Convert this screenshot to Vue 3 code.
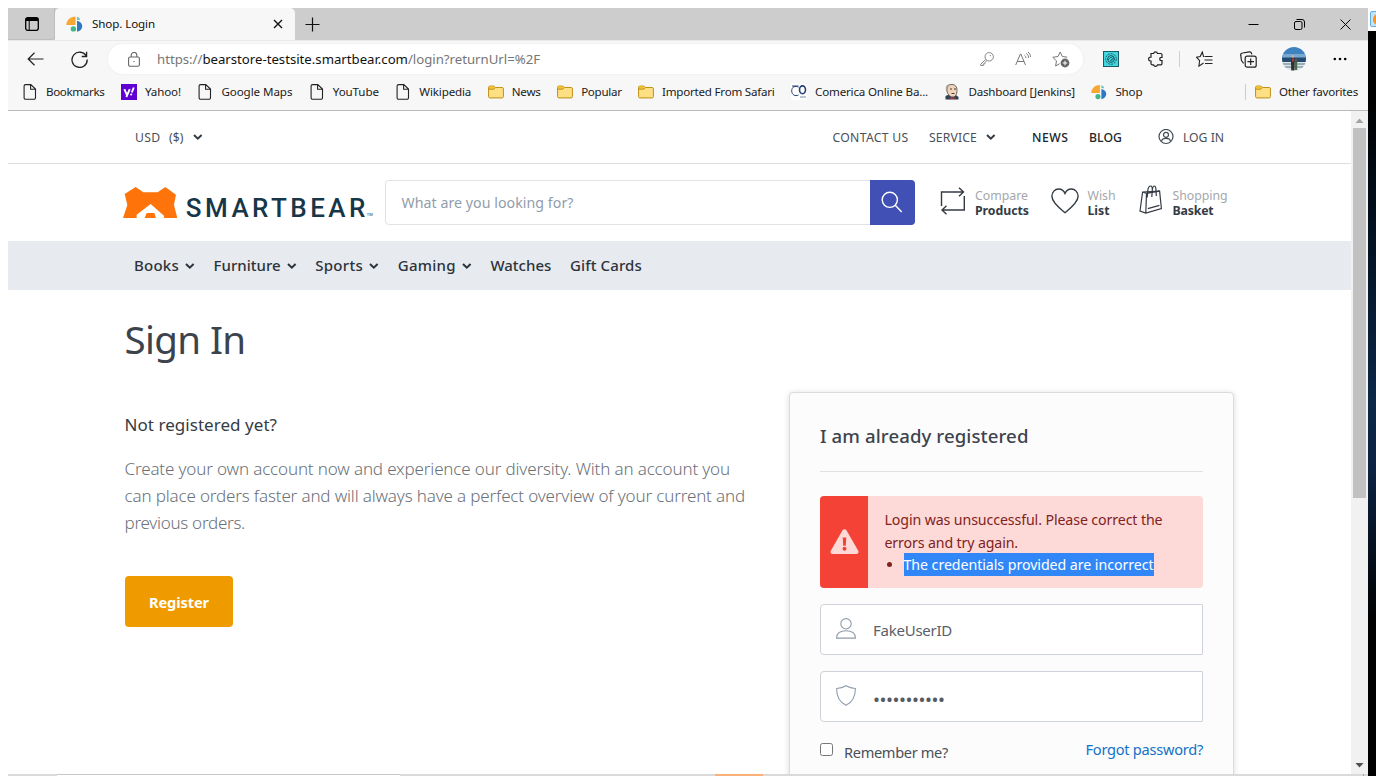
<script setup>
import { h } from 'vue'

// Tracks a label out (or in) so that it occupies the given width in pixels.
const vFit = {
  mounted(el, { value }) {
    if (!value) return
    el.style.letterSpacing = '0px'
    const count = [...el.textContent.trim()].length
    const natural = el.getBoundingClientRect().width
    el.style.letterSpacing = `${(value - natural) / count}px`
  }
}

const bookmarks = [
  { icon: 'page', label: 'Bookmarks', width: 58.5 },
  { icon: 'yahoo', label: 'Yahoo!', width: 36 },
  { icon: 'page', label: 'Google Maps', width: 71 },
  { icon: 'page', label: 'YouTube', width: 46 },
  { icon: 'page', label: 'Wikipedia', width: 52 },
  { icon: 'folder', label: 'News', width: 29 },
  { icon: 'folder', label: 'Popular', width: 40.5 },
  { icon: 'folder', label: 'Imported From Safari', width: 112.5 },
  { icon: 'bank', label: 'Comerica Online Ba...', width: 113 },
  { icon: 'jenkins', label: 'Dashboard [Jenkins]', width: 106.5 },
  { icon: 'shop', label: 'Shop', width: 27 }
]

const menu = [
  { label: 'Books', width: 45, sub: true },
  { label: 'Furniture', width: 67, sub: true },
  { label: 'Sports', width: 48, sub: true },
  { label: 'Gaming', width: 58, sub: true },
  { label: 'Watches', width: 61 },
  { label: 'Gift Cards', width: 72 }
]

const Chevron = () =>
  h('svg', { width: 10, height: 8, viewBox: '0 0 10 8', fill: 'none', stroke: 'currentColor', 'stroke-width': 2 }, [
    h('path', { d: 'M1 2l3.800 3.700L8.600 2' })
  ])

const ShopMark = () =>
  h('svg', { width: 17, height: 16, viewBox: '0 0 17 16' }, [
    h('path', { d: 'M9.5 .5v8.5H.3C.3 4.2 4.3 .5 9.5 .5z', fill: '#f9a733' }),
    h('path', { d: 'M11 .7c2 .4 3 1.800 3 3.300h-3z', fill: '#6cc6bd' }),
    h('path', { d: 'M11 4.800c3.200.6 5.200 2.600 5.200 5.400s-2 4.900-5.200 5.600z', fill: '#2f78c2' }),
    h('circle', { cx: 7.4, cy: 12.9, r: 2.7, fill: '#45b787' })
  ])
</script>

<template>
  <div class="desktop">
    <div class="browser">
      <div class="titlebar">
        <div class="tab-actions">
          <svg width="14" height="14" viewBox="0 0 14 14" fill="none" stroke="#000">
            <rect x=".7" y=".7" width="12.600" height="12.600" rx="2" stroke-width="1.300" />
            <path d="M1 2.500h12" stroke-width="3" /><path d="M4.200 3v10" />
          </svg>
        </div>
        <div class="tab">
          <ShopMark />
          <span v-fit="63" class="tab-title">Shop. Login</span>
          <svg width="10" height="10" viewBox="0 0 10 10" stroke="#111" stroke-width="1.400"><path d="M1 1l8 8M9 1L1 9" /></svg>
        </div>
        <svg class="plus" width="15" height="15" viewBox="0 0 15 15" stroke="#111" stroke-width="1.200"><path d="M7.500 .5v14M.5 7.500h14" /></svg>
        <div class="win-buttons">
          <svg width="11" height="11" viewBox="0 0 11 11" stroke="#000"><path d="M.5 5.500h10" /></svg>
          <svg width="11" height="11" viewBox="0 0 11 11" fill="none" stroke="#000"><rect x=".5" y="2.500" width="7.500" height="8" rx="1.500" /><path d="M2.500 .5h5.500a2.500 2.500 0 0 1 2.500 2.500v5.500" /></svg>
          <svg width="11" height="11" viewBox="0 0 11 11" stroke="#000"><path d="M.5 .5l10 10M10.500 .5l-10 10" /></svg>
        </div>
      </div>

      <div class="toolbar">
        <svg class="back" width="17" height="14" viewBox="0 0 17 14" fill="none" stroke="#222" stroke-width="1.200"><path d="M7.500 .8L1.200 7l6.300 6.200M1.200 7h15.300" /></svg>
        <svg class="reload" width="17" height="17" viewBox="0 0 17 17" fill="none" stroke="#222" stroke-width="1.300"><path d="M15.300 5.200A7.600 7.600 0 1 0 16.200 8.500" /><path d="M15.600 .8v4.700h-4.900" /></svg>
        <div class="address">
          <svg class="lock" width="12" height="15" viewBox="0 0 12 15" fill="none" stroke="#666" stroke-width="1.100"><rect x=".6" y="5" width="10.800" height="9.300" rx="1.500" /><path d="M3.200 5V3.300a2.800 2.800 0 0 1 5.600 0V5" /><circle cx="6" cy="9.600" r=".7" fill="#555" stroke="none" /></svg>
          <span v-fit="383" class="url">https://<b>bearstore-testsite.smartbear.com</b>/login?returnUrl=%2F</span>
          <div class="address-icons">
            <svg width="14" height="14" viewBox="0 0 14 14" fill="none" stroke="#858585"><circle cx="9.200" cy="4.800" r="4.200" /><path d="M5.700 7.300L.7 12.200v1.300h2.600v-1.600h1.600v-1.600l2-1.800" /><circle cx="10.400" cy="3.600" r=".7" fill="#858585" stroke="none" /></svg>
            <svg width="16" height="14" viewBox="0 0 16 14" fill="none" stroke="#777"><path d="M.7 13L5.400 2h.4l4.700 11M2.300 9.500H9" /><path d="M9.500 3.200c1 .7 1.400 1.700 1.300 2.800M11.200 1.300c1.700 1.200 2.500 2.800 2.200 4.700M13 0c1.700 1.400 2.600 3 2.400 5" /></svg>
            <svg width="18" height="17" viewBox="0 0 18 17" fill="none" stroke="#777"><path d="M8.200 1l2.100 4.500 5 .7M8.200 1L6 5.500l-5.200.8 3.700 3.600L3.600 15l4-2.300" /><circle cx="13" cy="12" r="4.400" fill="#666" stroke="none" /><path d="M13 9.700v4.600M10.700 12h4.600" stroke="#fff" /></svg>
          </div>
        </div>
        <svg class="ext" width="16" height="16" viewBox="0 0 16 16" fill="none" stroke="#175b66"><rect x=".5" y=".5" width="15" height="15" fill="#42d7df" /><circle cx="8" cy="8" r="5.300" stroke-dasharray="2 1" /><circle cx="8" cy="8" r="3.400" /><path d="M5 9l3-3 1.500 1.500L7 10M9 5l2 2-3 3.500" stroke-width=".8" /></svg>
        <svg class="puzzle" width="15" height="16" viewBox="0 0 15 16" fill="none" stroke="#222" stroke-width="1.200"><path d="M3 2.500h2.600a2 2 0 0 1 3.900 0h3.200c.8 0 1.300.5 1.300 1.300v2.500h-.6a1.700 1.700 0 0 0 0 3.400h.6v2.800c0 .8-.5 1.300-1.300 1.300H9.500a2 2 0 0 1-3.900 0H4.300c-.8 0-1.300-.5-1.300-1.300V10h-.5a1.900 1.900 0 0 1 0-3.800H3z" /></svg>
        <i class="divider"></i>
        <svg class="favs" width="17" height="16" viewBox="0 0 17 16" fill="none" stroke="#222" stroke-width="1.100"><path d="M8.500 5.500h-1L6.300 1 4.200 5.500l-3.700.7 3.100 3.500-.7 5.400L7.600 12M9 5.500h7.500M8.500 9h8M9 12.500h7.500" /></svg>
        <svg class="collections" width="17" height="17" viewBox="0 0 17 17" fill="none" stroke="#222" stroke-width="1.200"><rect x="5.200" y="5.200" width="11" height="11" rx="2" /><path d="M10.700 7.500v6.500M7.400 10.700H14M3.600 12.300L1.800 10a2 2 0 0 1-.4-1l-.7-4.800A2 2 0 0 1 2.500 2l6.800-1.200a2 2 0 0 1 2.200 1.500l.3 1" /></svg>
        <svg class="avatar" width="24" height="24" viewBox="0 0 24 24">
          <defs><clipPath id="face"><circle cx="12" cy="12" r="12" /></clipPath></defs>
          <g clip-path="url(#face)"><path d="M0 0h24v11H0z" fill="#3e83bf" /><path d="M0 7h24v4H0z" fill="#79a9d0" /><path d="M0 10.500h24V15H0z" fill="#244b70" /><path d="M0 15h24v9H0z" fill="#dfe5e8" /><path d="M0 17h24M1 20h22" stroke="#5f7585" stroke-width="1.200" /><path d="M9 14l.7-3.500h2.600l.5 4-.5 9H9.200z" fill="#352c31" /><path d="M12.500 14.500h2.700V23h-2.700z" fill="#426d49" /><path d="M9.900 11.500h2.200v3H9.900z" fill="#a63d3c" /><circle cx="11" cy="9.500" r="1.200" fill="#d4b3a0" /><circle cx="14" cy="13" r="1.100" fill="#765445" /></g>
        </svg>
        <svg class="more" width="14" height="4" viewBox="0 0 14 4"><circle cx="1.800" cy="2" r="1.300" /><circle cx="7" cy="2" r="1.300" /><circle cx="12.200" cy="2" r="1.300" /></svg>
      </div>

      <div class="bookmarks">
        <div v-for="item in bookmarks" :key="item.label" class="bookmark">
          <svg v-if="item.icon === 'page'" width="16" height="16" viewBox="0 0 16 16" fill="none" stroke="#222" stroke-width="1.100"><path d="M3.600.6h5.200L13.500 5v8.800a1.500 1.500 0 0 1-1.500 1.500H3.600A1.500 1.500 0 0 1 2.100 13.800V2.100A1.500 1.500 0 0 1 3.600.6zM8.600.8V5.200h4.700" /></svg>
          <svg v-else-if="item.icon === 'yahoo'" width="16" height="16" viewBox="0 0 16 16"><path d="M0 0h16v16H0z" fill="#5f01d1" /><path d="M3.300 5.200l2.400 5.200M8.800 5.200L5.300 13M12.800 3.500l-2 5" stroke="#fff" stroke-width="1.900" /><circle cx="10.200" cy="10.500" r="1.100" fill="#fff" /></svg>
          <svg v-else-if="item.icon === 'folder'" width="17" height="16" viewBox="0 0 17 16" fill="#ffdf84" stroke="#bb8a0c"><path d="M2 1.700h4.300l1.500 1.500H15c.9 0 1.400.5 1.400 1.400v8.300c0 .8-.5 1.400-1.400 1.400H2c-.9 0-1.400-.6-1.400-1.400V3.100c0-.9.5-1.400 1.400-1.400z" /><path d="M1 2.200h5l1.200 1.200L6 4.600H1z" fill="#f5c328" stroke="none" /><path d="M.6 5h5.600l1.500-1.600" fill="none" /></svg>
          <svg v-else-if="item.icon === 'bank'" width="16" height="16" viewBox="0 0 16 16" fill="none" stroke="#253f78"><path d="M0 0h16v16H0z" fill="#fff" stroke="none" /><path d="M7.500 3.200C4.500 1.300 .7 2.800.7 6.800s3.400 5.900 6.800 4.200M1 2h6.500" /><ellipse cx="11.500" cy="5.800" rx="3" ry="3.900" stroke-width="1.600" /><path d="M9 13h6" stroke="#7c8aac" /></svg>
          <svg v-else-if="item.icon === 'jenkins'" width="16" height="16" viewBox="0 0 16 16"><path d="M1.500 15.500V12L5 10.500h6l3.500 2.500v2.500z" fill="#2e4159" /><path d="M2.500 5C2.500 1.500 5 .5 8 .5s5 2 5 6-1.500 6.500-4.500 6.500S3 9.500 2.500 5z" fill="#efd4ba" stroke="#4d4440" stroke-width=".8" /><path d="M2 6C1 2 4 .2 6 .7L4 4v3z" fill="#aaa299" /><path d="M6 5h2M10 5h2M7.500 9.500h3" stroke="#443b37" /><path d="M6.500 13l2 1 2-1v2.500l-2-1-2 1z" fill="#d2392f" /></svg>
          <ShopMark v-else />
          <span v-fit="item.width">{{ item.label }}</span>
        </div>
        <div class="bookmark other">
          <svg width="17" height="16" viewBox="0 0 17 16" fill="#ffdf84" stroke="#bb8a0c"><path d="M2 1.700h4.300l1.500 1.500H15c.9 0 1.400.5 1.400 1.400v8.300c0 .8-.5 1.400-1.400 1.400H2c-.9 0-1.400-.6-1.400-1.400V3.100c0-.9.5-1.400 1.400-1.400z" /><path d="M1 2.200h5l1.200 1.200L6 4.600H1z" fill="#f5c328" stroke="none" /><path d="M.6 5h5.600l1.500-1.600" fill="none" /></svg>
          <span v-fit="79">Other favorites</span>
        </div>
      </div>

      <div class="viewport">
        <div class="page">
          <div class="topbar">
            <span v-fit="25.500" class="usd">USD</span><span v-fit="14.500" class="sign">($)</span><Chevron class="usd-arrow" />
            <div class="toplinks">
              <span v-fit="76">CONTACT US</span>
              <span v-fit="48" class="service">SERVICE</span><Chevron class="service-arrow" />
              <span v-fit="36.500" class="strong">NEWS</span>
              <span v-fit="33" class="strong blog">BLOG</span>
              <svg width="16" height="16" viewBox="0 0 16 16" fill="none" stroke="#444b54" stroke-width="1.200"><circle cx="8" cy="7.500" r="7" /><circle cx="8" cy="5.800" r="2.500" /><path d="M3.600 12.100c.3-2 1.400-2.800 4.400-2.800s4.100.8 4.400 2.800" /></svg>
              <span v-fit="41">LOG IN</span>
            </div>
          </div>

          <div class="header">
            <div class="logo">
              <svg width="54.300" height="31" viewBox="39 231 163 93" fill="#ff730b"><path d="M44 252L77 231l23 16h43l23-16 32 23-6 31 10 39h-40v-7L122 282l-42 32v10H39l13-39z" /><path d="M110 309h23l5 15h-34z" /></svg>
              <span v-fit="183" class="wordmark">SMARTBEAR</span><small>TM</small>
            </div>
            <div class="search">
              <span v-fit="172">What are you looking for?</span>
              <button><svg width="22" height="22" viewBox="0 0 22 22" fill="none" stroke="#fff" stroke-width="1.400"><circle cx="8.800" cy="8.800" r="7.600" /><path d="M14.200 14.200l6.500 6.800" /></svg></button>
            </div>
            <div class="tool compare">
              <svg width="26" height="28" viewBox="0 0 26 28" fill="none" stroke="#343b44" stroke-width="1.400"><path d="M1.500 19V5h22M19 .7L23.500 5 19 9.300M24.300 9v14H2M6.500 18.700L2 23l4.500 4.300" /></svg>
              <p><span v-fit="53">Compare</span><b v-fit="54">Products</b></p>
            </div>
            <div class="tool wish">
              <svg width="28" height="26" viewBox="0 0 28 26" fill="none" stroke="#343b44" stroke-width="1.400"><path d="M14 24.700C9 20.700.9 14.500.9 8.300.9 4.200 3.900 1 7.600 1c2.900 0 5.200 1.600 6.400 4.400C15.200 2.600 17.500 1 20.400 1c3.700 0 6.700 3.200 6.700 7.300C27.100 14.500 19 20.700 14 24.700z" /></svg>
              <p><span v-fit="28">Wish</span><b v-fit="22">List</b></p>
            </div>
            <div class="tool basket">
              <svg width="24" height="29" viewBox="0 0 24 29" fill="none" stroke="#343b44" stroke-width="1.200"><path d="M3.600 7L1 26l5.800 2 15.600-4.500L20.600 6.200zM3.600 7l3.900 1.400 13.100-2.200M7.500 8.400L6.800 28M8.800 23.600l11.600-3.200" /><path d="M8.200 12.500L8.800 5.500C9.200 2.500 10.300 1 11.600 1s1.800 1.600 1.700 4M12.800 12l.5-7c.3-2.500 1-4 2-4s1.600 1.500 1.700 4l.3 6" /></svg>
              <p><span v-fit="55">Shopping</span><b v-fit="41">Basket</b></p>
            </div>
          </div>

          <div class="menu">
            <div v-for="item in menu" :key="item.label" class="menu-item">
              <span v-fit="item.width">{{ item.label }}</span><Chevron v-if="item.sub" />
            </div>
          </div>

          <div class="main">
            <div class="intro">
              <h1><span v-fit="121">Sign In</span></h1>
              <h2><span v-fit="152.500">Not registered yet?</span></h2>
              <p class="copy">
                <span v-fit="605.500">Create your own account now and experience our diversity. With an account you</span>
                <span v-fit="620.500">can place orders faster and will always have a perfect overview of your current and</span>
                <span v-fit="120.500">previous orders.</span>
              </p>
              <button class="register"><span v-fit="60">Register</span></button>
            </div>

            <div class="card">
              <h3><span v-fit="208.500">I am already registered</span></h3>
              <div class="alert">
                <div class="alert-icon"><svg width="29" height="25" viewBox="0 0 29 25"><path d="M12.400 1.500c1-1.700 3.200-1.700 4.200 0l11.600 20.200c.9 1.600-.1 3.200-1.900 3.200H2.700c-1.800 0-2.800-1.600-1.900-3.200z" fill="#fdd9d7" /><path d="M12.700 8.500h3.600l-.5 8.200h-2.600z" fill="#f44336" /><circle cx="14.500" cy="19.800" r="2" fill="#f44336" /></svg></div>
                <div class="alert-text">
                  <span v-fit="278">Login was unsuccessful. Please correct the</span>
                  <span v-fit="133.500">errors and try again.</span>
                  <div class="bullet"><i></i><mark v-fit="250">The credentials provided are incorrect</mark></div>
                </div>
              </div>
              <div class="field">
                <svg width="20" height="21" viewBox="0 0 20 21" fill="none" stroke="#919cab" stroke-width="1.100"><ellipse cx="10" cy="5.800" rx="5.200" ry="5.200" /><path d="M.6 20.100c0-5 3.200-7.300 9.400-7.300s9.400 2.300 9.400 7.300z" /></svg>
                <span v-fit="79">FakeUserID</span>
              </div>
              <div class="field">
                <svg width="20" height="21" viewBox="0 0 20 21" fill="none" stroke="#919cab" stroke-width="1.100"><path d="M10 .8c2.800 1.700 5.800 2.500 9.400 2.700C19.400 11.500 17 17 10 20.300 3 17 .6 11.500.6 3.500 4.200 3.300 7.200 2.500 10 .8z" /></svg>
                <span v-fit="71.500" class="dots">•••••••••••</span>
              </div>
              <div class="options">
                <i class="check"></i>
                <span v-fit="104" class="remember">Remember me?</span>
                <a v-fit="117.500">Forgot password?</a>
              </div>
            </div>
          </div>
        </div>
        <div class="scrollbar">
          <svg width="9" height="5" viewBox="0 0 9 5" fill="#a3a3a3"><path d="M.5 5l4-4.500 4 4.500z" /></svg>
          <div class="thumb"></div>
          <svg class="down" width="9" height="5" viewBox="0 0 9 5" fill="#505050"><path d="M.5 0l4 4.500 4-4.500z" /></svg>
        </div>
      </div>
      <div class="taskbar"><i class="task-search"></i><i class="task-active"></i><i class="task-end"></i></div>
    </div>
    <div class="backdrop"><div class="backdrop-icon"><i></i></div><div class="backdrop-fill"></div></div>
  </div>
</template>

<style>
body { background: #fff; overflow: hidden; }
</style>

<style scoped>
* { box-sizing: border-box; }
.desktop { display: flex; width: 1376px; height: 784px; padding: 8px 0 8px 8px; overflow: hidden; background: #fff; font-family: "Noto Sans", "Open Sans", sans-serif; color: #343b44; }
.desktop span, .desktop b, .desktop a { white-space: nowrap; }
svg { display: block; flex: none; }
h1, h2, h3, p { margin: 0; font-weight: 400; }
button { border: 0; padding: 0; font: inherit; }
.browser { width: 1360px; height: 768px; display: flex; flex-direction: column; background: #f7f7f7; }

.titlebar { display: flex; height: 32px; background: #cdcdcd; align-items: center; }
.tab-actions { width: 47px; height: 32px; padding: 9px 0 0 17px; border-bottom: 1px solid #bdbdbd; border-right: 1px solid #bdbdbd; border-radius: 0 0 4px 0; }
.tab { display: flex; align-items: center; width: 240px; height: 32px; padding: 0 12px 0 11px; background: #f7f7f7; border-radius: 5px 5px 0 0; }
.tab-title { margin: 0 auto 0 9px; padding-bottom: 2px; font-size: 11.600px; color: #111; }
.plus { margin-left: 10px; }
.win-buttons { display: flex; gap: 35px; margin-left: auto; padding-right: 17.500px; }

.toolbar { display: flex; align-items: center; height: 38px; padding-bottom: 1px; border-top: 1px solid #e8e8e8; }
.back { margin-left: 19px; }
.reload { margin-left: 27px; }
.address { display: flex; align-items: center; width: 975px; height: 30px; margin-left: 20px; background: #fff; border-radius: 15px; box-shadow: 0 0 3px #ececec; }
.lock { margin-left: 20px; }
.url { margin-left: 17px; font-size: 13.200px; color: #767676; }
.url b { font-weight: 400; color: #111; }
.address-icons { display: flex; align-items: center; gap: 21px; margin: 0 13.500px 0 auto; }
.ext { margin-left: 20px; }
.puzzle { margin-left: 29px; }
.divider { width: 1px; height: 16px; margin-left: 16px; background: #cfcfcf; }
.favs { margin-left: 16px; }
.collections { margin-left: 26.500px; }
.avatar { margin-left: 25.500px; }
.more { margin-left: 27px; }

.bookmarks { display: flex; gap: 16.450px; height: 33px; padding: 6px 10px 0 14px; border-bottom: 1px solid #b9b9b9; font-size: 11.600px; color: #1b1b1b; }
.bookmark { display: flex; gap: 8px; height: 16px; align-items: center; }
.bookmark svg { width: 16px; }
.bookmark span { padding-bottom: 2px; }
.other { margin-left: auto; padding-left: 9px; border-left: 1px solid #cbcbcb; }

.viewport { display: flex; height: 663px; }
.page { width: 1343px; height: 663px; overflow: hidden; background: #fff; }
.scrollbar { display: flex; flex-direction: column; align-items: center; width: 17px; height: 663px; padding: 7px 2px 6px; background: #f1f1f1; }
.thumb { width: 13px; height: 370px; margin-top: 5px; background: #c1c1c1; flex: none; }
.down { margin-top: auto; }

.topbar { display: flex; align-items: center; height: 53px; padding: 0 127px; border-bottom: 1px solid #dedede; font-size: 12.200px; color: #4a5058; }
.sign { margin-left: 8.500px; }
.usd-arrow { margin-left: 9px; color: #343b44; }
.toplinks { display: flex; align-items: center; margin-left: auto; }
.service { margin-left: 20.500px; }
.service-arrow { margin: 0 36px 0 9px; color: #343b44; }
.strong { color: #20262c; font-weight: 500; }
.blog { margin: 0 36px 0 20.500px; }
.toplinks svg:nth-last-child(2) { margin-right: 9px; }

.header { display: flex; height: 77px; padding: 16px 0 0 115px; }
.logo { display: flex; width: 262px; padding-top: 7px; align-items: flex-start; }
.wordmark { margin: 3px 0 0 8.500px; font: 500 26px/36px Roboto, sans-serif; color: #173647; }
.logo small { margin: 25px 0 0 -2px; font: 4px/5px Roboto, sans-serif; color: #173647; }
.search { display: flex; width: 530px; height: 45px; align-items: center; padding-left: 15.500px; border: 1px solid #e0e2e5; border-radius: 4px; font-size: 14.200px; color: #929daa; }
.search button { display: grid; place-items: center; width: 45px; height: 45px; margin: 0 -1px 0 auto; padding: 0 2px 1px 0; background: #4050b5; border-radius: 0 4px 4px 0; }
.tool { display: flex; }
.tool p { display: flex; flex-direction: column; align-items: flex-start; margin: 8px 0 0 9px; font-size: 12.300px; line-height: 15px; color: #a5a8ac; }
.tool b { font-weight: 700; color: #343b44; }
.compare { margin-left: 25px; width: 110.500px; }
.compare svg { margin-top: 7px; }
.wish { width: 88px; }
.wish svg { margin-top: 8px; }
.basket svg { margin-top: 5px; }
.basket p { margin-left: 10px; }

.menu { display: flex; gap: 18.600px; height: 49px; padding: 0 126px 2px; background: #e7eaef; font-size: 15px; font-weight: 500; color: #2c333b; }
.menu-item { display: flex; align-items: center; gap: 6px; }
.menu-item svg { margin-top: 3px; }

.main { display: flex; }
.intro { width: 664px; padding-left: 116.500px; }
h1 { margin-top: 22px; font-size: 38.500px; line-height: 54px; color: #3c434c; }
h2 { margin-top: 46px; font-size: 17px; line-height: 26px; color: #343b44; }
.copy { display: flex; flex-direction: column; align-items: flex-start; margin-top: 17px; font-size: 17px; font-weight: 300; line-height: 27px; color: #6b7178; }
.register { display: grid; place-items: center; width: 108px; height: 51px; margin: 40px 0 0 .5px; border-radius: 4px; background: #ef9b00; color: #fff; font-size: 14.600px; font-weight: 700; }
h1 span, h2 span, h3 span { display: inline-block; }

.card { width: 445px; height: 420px; margin: 102px 0 0 117px; padding: 0 30px; background: #fcfcfc; border: 1px solid #dadcde; border-radius: 4px; box-shadow: 0 1px 6px rgba(0, 0, 0, .15); }
h3 { height: 79px; padding-top: 29px; border-bottom: 1px solid #e0e1e2; font-size: 18.600px; line-height: 28px; font-weight: 500; color: #3c434c; }
.alert { display: flex; height: 92px; margin: 24px 0 16px; border-radius: 4px; overflow: hidden; background: #fdd9d7; color: #7f231c; }
.alert-icon { display: grid; place-items: center; width: 48px; padding-bottom: 1px; background: #f44336; }
.alert-text { display: flex; flex-direction: column; align-items: flex-start; padding: 12px 0 0 16.500px; font-size: 14.200px; line-height: 23px; }
.bullet { display: flex; align-items: center; margin-top: -1px; }
.bullet i { width: 5px; height: 5px; margin: 0 12px 0 2px; border-radius: 50%; background: #7f231c; }
mark { height: 23px; background: #3187f7; color: #fff; white-space: nowrap; }
.field { display: flex; height: 51px; margin-bottom: 16px; padding: 13px 15px; border: 1px solid #ced2d9; border-radius: 4px 1px 1px 4px; background: #fff; font-size: 15px; line-height: 24px; color: #596068; }
.field span { margin-left: 17px; }
.field .dots { font-size: 18.500px; line-height: 27px; color: #555b62; }
.options { display: flex; padding-top: 5px; font-size: 14.600px; line-height: 22px; color: #4a5058; }
.check { width: 13px; height: 13px; border: 1px solid #767676; border-radius: 2.500px; background: #fff; }
.remember { margin: -2px auto 0 11px; }
.options a { margin-top: -5px; color: #1371c8; }

.taskbar { display: flex; height: 2px; background: #dadada; flex: none; }
.task-search { width: 343px; margin-left: 49px; border-top: 1px solid #c8c8c8; background: #fff; }
.task-active { width: 48px; margin-left: 315px; background: #fbb07a; }
.task-end { width: 1px; margin-left: auto; margin-right: 4px; background: #a5a5a5; }
.backdrop { width: 8px; height: 768px; flex: none; overflow: hidden; }
.backdrop-icon { width: 16px; height: 16px; margin: 3px 0 4px 2px; padding: 2px; border: 1px solid #62aee0; border-radius: 2px; background: #c2e2f7; }
.backdrop-icon i { display: block; width: 11px; height: 11px; border-radius: 50%; background: #f7941d; }
.backdrop-fill { height: 745px; background: linear-gradient(#000 0, #000 70px, #020e1b 180px, #0d2746 370px, #0c2240 440px, #000 590px); }
</style>
